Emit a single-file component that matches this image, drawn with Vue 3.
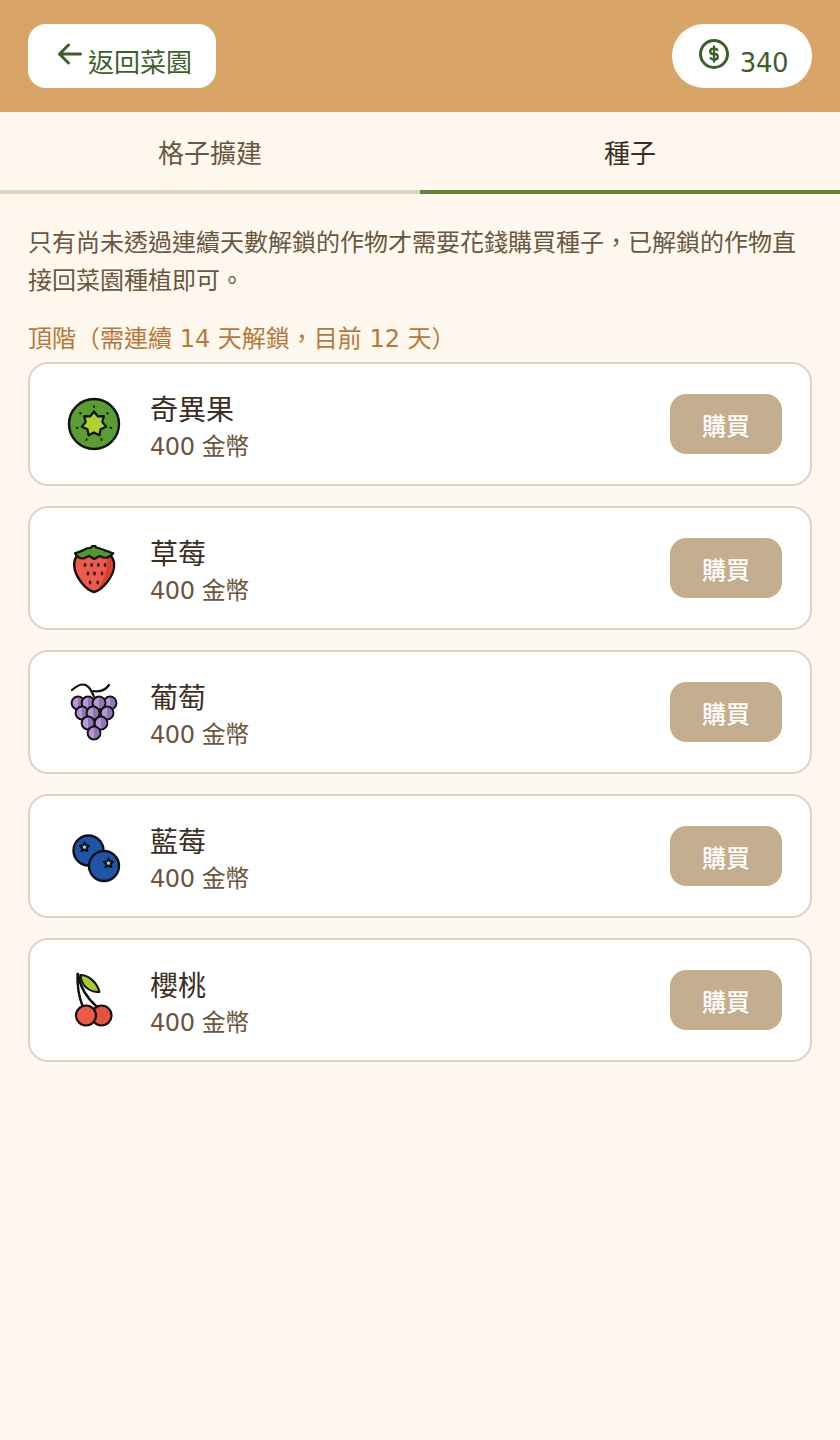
<script setup>
const crops = [
  { id: 'kiwi', name: '奇異果' },
  { id: 'strawberry', name: '草莓' },
  { id: 'grape', name: '葡萄' },
  { id: 'blueberry', name: '藍莓' },
  { id: 'cherry', name: '櫻桃' },
]
const grapes = [
  [20, 27], [52, 27], [30, 27], [41, 27],
  [24, 37], [49, 37], [35, 37],
  [30, 47], [43, 47],
  [36, 57],
]
const seeds = [
  [27, 33], [33.7, 33], [40.3, 33], [47, 33],
  [30, 41.5], [36.5, 41.5], [44, 41.5],
  [32, 50.5], [39.7, 50.5],
]
const flecks = Array.from({ length: 7 }, (_, i) => (i * 360) / 7)

// seven-point star in the middle of the kiwi
const star = Array.from({ length: 14 }, (_, i) => {
  const r = i % 2 ? 8.5 : 12.5
  const a = (i * Math.PI) / 7
  return `${(36 + r * Math.sin(a)).toFixed(1)},${(36 - r * Math.cos(a)).toFixed(1)}`
}).join(' ')
</script>

<template>
  <div class="page">
    <header class="top">
      <button class="pill back">
        <svg class="ico" viewBox="0 0 24 24"><path d="M5 12h14M5 12l6 6M5 12l6-6" /></svg>返回菜園
      </button>
      <div class="pill coins">
        <svg class="ico" viewBox="0 0 24 24">
          <circle cx="12" cy="12" r="9" />
          <path class="dollar" d="M14.2 9.3a1.6 1.6 0 0 0-1.5-.9h-1.4a1.800 1.800 0 1 0 0 3.600h1.400a1.800 1.800 0 1 1 0 3.600h-1.400a1.600 1.600 0 0 1-1.500-.9M12 7v10" />
        </svg>
        340
      </div>
    </header>

    <nav class="tabs">
      <div class="tab">格子擴建</div>
      <div class="tab active">種子</div>
    </nav>

    <main class="content">
      <p class="note">只有尚未透過連續天數解鎖的作物才需要花錢購買種子，已解鎖的作物直接回菜園種植即可。</p>
      <h2 class="tier">頂階（需連續 14 天解鎖，目前 12 天）</h2>

      <div class="list">
        <div class="card" v-for="c in crops" :key="c.id">
          <svg class="crop" viewBox="0 0 72 72">
            <g v-if="c.id === 'kiwi'">
              <circle cx="36" cy="36" r="25" fill="#5a9e32" stroke="#111" stroke-width="2.4" />
              <polygon :points="star" fill="#b1cf2f" stroke="#111" stroke-width="2.2" stroke-linejoin="round" />
              <path v-for="a in flecks" :key="a" d="M36 17.5v2.5" stroke="#111" stroke-width="1.6" :transform="`rotate(${a} 36 36)`" />
            </g>
            <g v-else-if="c.id === 'strawberry'">
              <path d="M25 22C18 22 15.500 28 16.300 35 17.500 45 27.500 58 36 60 44.500 58 55 45 56 35 56.500 28 54 22 47 22z" fill="#f05a4a" stroke="#111" stroke-width="2.4" stroke-linejoin="round" />
              <path d="M48 23c5 1 7.300 6 6.800 12-.8 8-8 17-15 22 6-9 11-20 8.200-34z" fill="#d9412f" />
              <path d="M17 21.300c4-1.300 9-3.300 11.500-4.800l5-1 .5-1.500h3.500l.5 1.500 4 1c4 1.500 9 3.500 13.300 4.800-3.300 3.700-6.300 5.200-10 4.200l-3.800-1.500-5.200 3-5.300-3-5.700 2.500c-3.300 0-6.300-2-8.300-5.200z" fill="#4f9a2c" stroke="#111" stroke-width="2.2" stroke-linejoin="round" />
              <ellipse v-for="(s, i) in seeds" :key="i" :cx="s[0]" :cy="s[1]" rx="1.3" ry="2" fill="#111" />
            </g>
            <g v-else-if="c.id === 'grape'">
              <path d="M14 14c4-3.500 7.500-5.500 11-5.500 5.500 0 8 5.500 11 12M35.500 15c6 1 12-1 15.500-6" fill="none" stroke="#111" stroke-width="2.2" stroke-linecap="round" />
              <g v-for="(g, i) in grapes" :key="i">
                <circle :cx="g[0]" :cy="g[1]" r="6.4" fill="#b49ad0" stroke="#111" stroke-width="2" />
                <path :d="`M${g[0]} ${g[1] - 5.4}a5.4 5.4 0 0 1 0 10.800z`" fill="#9273b5" />
              </g>
            </g>
            <g v-else-if="c.id === 'blueberry'">
              <circle cx="30.500" cy="30.500" r="15" fill="#1f55a8" stroke="#111" stroke-width="2.4" />
              <path d="M26.500 22.500l1.400 2.800 3.100.4-2.200 2.200.5 3.100-2.800-1.500-2.800 1.500.5-3.100-2.200-2.200 3.100-.4z" fill="#8fd3f4" stroke="#111" stroke-width="2" stroke-linejoin="round" />
              <circle cx="46" cy="46" r="15" fill="#1f55a8" stroke="#111" stroke-width="2.4" />
              <path d="M50.500 38.500l1.400 2.800 3.100.4-2.200 2.200.5 3.100-2.800-1.500-2.800 1.500.5-3.100-2.200-2.200 3.100-.4z" fill="#8fd3f4" stroke="#111" stroke-width="2" stroke-linejoin="round" />
            </g>
            <g v-else>
              <circle cx="43.500" cy="51.500" r="10" fill="#e5533f" stroke="#111" stroke-width="2.2" />
              <circle cx="28" cy="51.500" r="10" fill="#ef5a48" stroke="#111" stroke-width="2.2" />
              <path d="M19.500 10c-.5 12 2 24 5 32M20 10c2 14 9 24 19 33" fill="none" stroke="#111" stroke-width="2.4" stroke-linecap="round" />
              <path d="M22.500 11c7 0 16 6 19 17-8 .5-18-4-19-17z" fill="#a9c92f" stroke="#111" stroke-width="2" stroke-linejoin="round" />
            </g>
          </svg>
          <div class="info">
            <div class="name">{{ c.name }}</div>
            <div class="price">400 金幣</div>
          </div>
          <button class="buy">購買</button>
        </div>
      </div>
    </main>
  </div>
</template>

<style>
html, body {
  margin: 0;
  background: #fff8ee;
}
</style>

<style scoped>
.page {
  min-height: 1440px;
  background: #fff8ee;
  font-family: "DejaVu Sans", "Noto Sans CJK TC", sans-serif;
  color: #6b5640;
}
.top {
  display: flex;
  justify-content: space-between;
  padding: 24px 28px;
  background: #d9a566;
}
.pill {
  box-sizing: border-box;
  height: 64px;
  padding: 12px 24px;
  background: #fff;
  border: 0;
  color: #3f5f2a;
  font: inherit;
  font-size: 26px;
  line-height: 40px;
  white-space: nowrap;
}
.back {
  border-radius: 18px;
}
.coins {
  border-radius: 32px;
  letter-spacing: -0.5px;
}
.ico {
  width: 36px;
  height: 36px;
  fill: none;
  stroke: currentColor;
  stroke-width: 2;
  stroke-linecap: round;
  stroke-linejoin: round;
}
.dollar {
  stroke-width: 1.6;
}
.tabs {
  display: flex;
}
.tab {
  flex: 1;
  height: 78px;
  line-height: 84px;
  text-align: center;
  font-size: 26px;
  border-bottom: 4px solid #e0d4bf;
}
.tab.active {
  color: #3d2e1f;
  border-bottom-color: #5c8a3a;
}
.content {
  padding: 30px 28px 0;
}
.note {
  margin: 0;
  font-size: 24px;
  line-height: 38.4px;
}
.tier {
  margin: 20px 0 5px;
  font-size: 24px;
  font-weight: 400;
  line-height: 36px;
  color: #b8783a;
}
.list {
  display: flex;
  flex-direction: column;
  gap: 20px;
}
.card {
  display: flex;
  align-items: center;
  gap: 20px;
  box-sizing: border-box;
  height: 124px;
  padding: 0 28px;
  background: #fff;
  border: 2px solid #e0d4bf;
  border-radius: 20px;
}
.crop {
  flex: none;
  width: 72px;
  height: 72px;
}
.info {
  flex: 1;
  padding-top: 7px;
}
.name {
  font-size: 28px;
  line-height: 39px;
  color: #3d2e1f;
}
.price {
  font-size: 24px;
  line-height: 34px;
  letter-spacing: -0.45px;
}
.buy {
  width: 112px;
  height: 60px;
  padding: 2px 0 0;
  background: #c4ae90;
  border: 0;
  border-radius: 16px;
  color: #fff;
  font: inherit;
  font-size: 24px;
  font-weight: 500;
}
</style>
